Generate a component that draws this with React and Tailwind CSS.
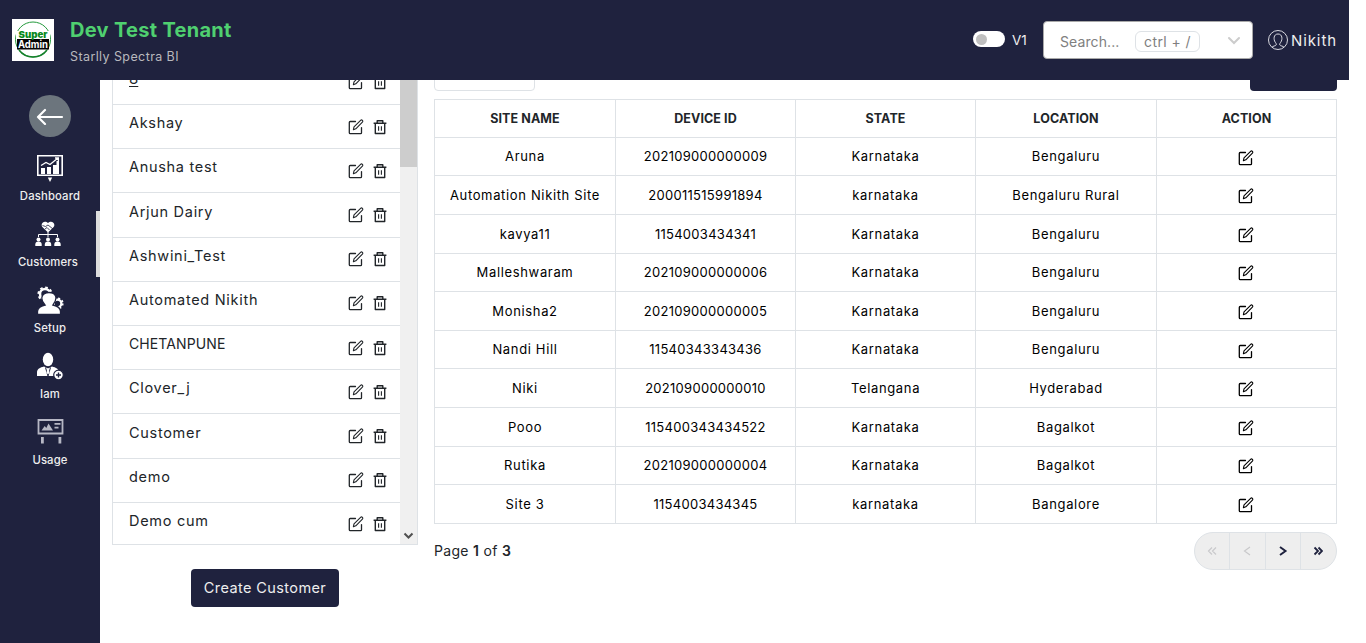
const customers = ["8", "Akshay", "Anusha test", "Arjun Dairy", "Ashwini_Test", "Automated Nikith", "CHETANPUNE", "Clover_j", "Customer", "demo", "Demo cum"];

const columns = ["SITE NAME", "DEVICE ID", "STATE", "LOCATION", "ACTION"];

const sites = [
  ["Aruna", "202109000000009", "Karnataka", "Bengaluru"],
  ["Automation Nikith Site", "200011515991894", "karnataka", "Bengaluru Rural"],
  ["kavya11", "1154003434341", "Karnataka", "Bengaluru"],
  ["Malleshwaram", "202109000000006", "Karnataka", "Bengaluru"],
  ["Monisha2", "202109000000005", "Karnataka", "Bengaluru"],
  ["Nandi Hill", "11540343343436", "Karnataka", "Bengaluru"],
  ["Niki", "202109000000010", "Telangana", "Hyderabad"],
  ["Pooo", "115400343434522", "Karnataka", "Bagalkot"],
  ["Rutika", "202109000000004", "Karnataka", "Bagalkot"],
  ["Site 3", "1154003434345", "karnataka", "Bangalore"],
];

function EditIcon() {
  return (
    <svg viewBox="0 0 16 16" className="h-4 w-4 shrink-0" fill="none" stroke="currentColor" strokeWidth="1.3" strokeLinecap="round" strokeLinejoin="round">
      <path d="M7.500 2.500H2.200a.9.900 0 0 0-.9.900v10.400c0 .5.400.9.900.9h10.400c.5 0 .9-.4.900-.9V8.600" />
      <path d="M5.400 10.700l.6-2.900 6.600-6.500c.5-.5 1.300-.5 1.800 0s.5 1.300 0 1.800L7.800 9.800z" strokeWidth="1.100" />
    </svg>
  );
}

function TrashIcon() {
  return (
    <svg viewBox="0 0 16 16" className="ml-2 h-4 w-4 shrink-0" fill="none" stroke="currentColor" strokeWidth="1.400" strokeLinejoin="round">
      <path d="M1.600 4.200h12.800M3.300 4.200v10.300h9.400V4.200M5.200 4V1.700h5.600V4" />
      <path d="M6.600 7.200v4.500M9.400 7.200v4.500" strokeWidth="1.100" />
    </svg>
  );
}

function Logo() {
  return (
    <svg viewBox="0 0 42 42" className="h-[42px] w-[42px] bg-white">
      <circle cx="21" cy="20.5" r="17.500" fill="none" stroke="#249a3c" strokeWidth="1" />
      <path d="M7 31A17.500 17.500 0 0 0 35 31" fill="none" stroke="#15802b" strokeWidth="1.600" />
      <rect x="4" y="12" width="34" height="8" fill="#fff" />
      <rect x="5" y="20" width="32" height="10.500" fill="#050505" />
      <text x="21" y="18.800" textAnchor="middle" textLength="29" lengthAdjust="spacingAndGlyphs" fontFamily="Inter, sans-serif" fontWeight="900" fontSize="9.500" fill="#0a8a1c">Super</text>
      <text x="21" y="28.800" textAnchor="middle" textLength="30" lengthAdjust="spacingAndGlyphs" fontFamily="Inter, sans-serif" fontWeight="700" fontSize="10" fill="#fff">Admin</text>
    </svg>
  );
}

function DashboardIcon() {
  return (
    <svg viewBox="0 0 28 28" className="h-7 w-7" fill="#fff">
      <path d="M1.800 1.800h24.400v19.400H1.800z" fill="none" stroke="#fff" strokeWidth="1.600" />
      <path d="M5 14h4v6H5zM11 13h4v7h-4zM17 11h3.500v9H17zM20.500 7H23v13h-2.500z" />
      <path d="M5 11.500l5-3 4 2 8-6.500M19 4h3.400v3.400" fill="none" stroke="#fff" strokeWidth="1.300" />
      <path d="M11.800 23.500h4.400L14 28z" />
    </svg>
  );
}

function Person({ x }) {
  return (
    <g transform={`translate(${x} 0)`}>
      <circle cx="0" cy="19.500" r="2" />
      <path d="M-3.200 26v-1.400a3.200 3.200 0 0 1 6.400 0V26z" />
    </g>
  );
}

function CustomersIcon() {
  return (
    <svg viewBox="0 0 28 28" className="h-7 w-7" fill="#fff">
      <path d="M14 12.500L8.600 7.300C5.500 3.600 10.600 -.6 14 3c3.400-3.600 8.500.6 5.400 4.300z" />
      <path d="M8.500 5.500l3 1 2.500-1.500 5 4M11 9l2-1.500 2.500 2.500" fill="none" stroke="#1f223e" strokeWidth=".8" />
      <path d="M14 12v5M4.500 17v-2.500h19V17" fill="none" stroke="#fff" strokeWidth="1" />
      <Person x={4.5} />
      <Person x={14} />
      <Person x={23.5} />
    </svg>
  );
}

function SetupIcon() {
  return (
    <svg viewBox="0 0 28 28" className="h-7 w-7" fill="#fff">
      <circle cx="9" cy="8" r="5" fill="none" stroke="#fff" strokeWidth="2.500" />
      <circle cx="9" cy="8" r="6.600" fill="none" stroke="#fff" strokeWidth="2" strokeDasharray="2.590 2.590" />
      <circle cx="21.500" cy="17.500" r="3.800" fill="none" stroke="#fff" strokeWidth="2.200" />
      <circle cx="21.500" cy="17.500" r="5.200" fill="none" stroke="#fff" strokeWidth="1.800" strokeDasharray="2.040 2.040" />
      <path d="M1.500 28.500v-3c0-4 3-5.500 7.500-6.500-5.500-6-3.500-12.500 4-12.500S22 12.500 17 19c4.500 1 7.500 2.500 7.500 6.500v3z" stroke="#1f223e" strokeWidth="1.300" />
    </svg>
  );
}

function IamIcon() {
  return (
    <svg viewBox="0 0 28 28" className="h-7 w-7" fill="#fff">
      <ellipse cx="12" cy="7.500" rx="5.200" ry="6.800" />
      <path d="M1 24v-3.500c0-3.500 3-5 7-6l4 2 4-2c4 1 7 2.500 7 6V24z" />
      <path d="M9.500 15.500L12 24l2.500-8.500" fill="none" stroke="#1f223e" strokeWidth="1" />
      <path d="M11.200 16.500h1.600l.6 4-1.400 2-1.400-2z" />
      <circle cx="22.500" cy="23" r="4.800" stroke="#1f223e" strokeWidth="1.200" />
      <path d="M20 23h5M22.500 20.500v5" stroke="#1f223e" strokeWidth="1.400" />
    </svg>
  );
}

function UsageIcon() {
  return (
    <svg viewBox="0 0 28 28" className="h-7 w-7" fill="#b6b7c4">
      <path d="M2.500 2h24v13.500h-24z" fill="none" stroke="#b6b7c4" strokeWidth="1.800" />
      <path d="M5.500 12.500l3.200-4.500 1.600 2L12.500 5.500l4.500 7zM18.500 5h6v1.800h-6zM18.500 8.800h4v1.800h-4zM5 19h2.800v6.500H5zM22.500 19h2.800v6.500h-2.800z" />
    </svg>
  );
}

const nav = [
  { label: "Dashboard", Icon: DashboardIcon },
  { label: "Customers", Icon: CustomersIcon, active: true },
  { label: "Setup", Icon: SetupIcon },
  { label: "Iam", Icon: IamIcon },
  { label: "Usage", Icon: UsageIcon },
];

function Header() {
  return (
    <header className="z-10 flex h-20 w-[1349px] shrink-0 items-center bg-[#1f223e] pl-3 pr-3">
      <Logo />
      <div className="ml-4 pt-0.5">
        <div className="text-[20px] leading-[30px] font-bold tracking-[0.3px] text-[#4fd070]">Dev Test Tenant</div>
        <div className="text-[12.5px] leading-[23px] tracking-[0.4px] text-[#b9b9bd]">Starlly Spectra BI</div>
      </div>
      <div className="mb-0.5 ml-auto flex h-4 w-8 items-center rounded-full bg-white px-[3px]">
        <div className="h-[11px] w-[11px] rounded-full bg-[#bfbfbf]" />
      </div>
      <span className="ml-[7px] w-[15px] text-[13.5px] text-[#eeeeee]">V1</span>
      <div className="ml-[16px] flex h-[38px] w-[210px] items-center rounded border border-[#a9a9a9] bg-white pl-4 pr-3 text-[#808080]">
        <span className="w-[75px] pt-0.5 text-[14px] tracking-[0.1px]">Search...</span>
        <span className="mt-0.5 flex h-[21px] w-[65px] items-center justify-center rounded-md border border-[#dee2e6] text-[14px] tracking-[0.4px]">ctrl + /</span>
        <svg viewBox="0 0 12 12" className="ml-auto h-3 w-3" fill="none" stroke="#cccccc" strokeWidth="2" strokeLinecap="round"><path d="M1 4l5 5 5-5" /></svg>
      </div>
      <svg viewBox="0 0 20 20" className="ml-[15px] h-5 w-5" fill="none" stroke="#ececf0" strokeWidth="0.9">
        <circle cx="10" cy="10" r="9.500" />
        <path d="M4 17.300c.5-1.300 3.800-1.300 4.200-2.300.3-1-.2-1.800-1-2.800C5.400 9.500 5.400 4 10 4s4.600 5.500 2.800 8.200c-.8 1-1.300 1.800-1 2.800.4 1 3.700 1 4.200 2.300" />
      </svg>
      <span className="ml-[3px] w-[46px] pt-0.5 text-[15px] tracking-[0.9px] text-[#eeeeee]">Nikith</span>
    </header>
  );
}

function Sidebar() {
  return (
    <aside className="flex w-[100px] shrink-0 flex-col items-center bg-[#1f223e] pt-[15px]">
      <button className="mb-2 flex h-[42px] w-[42px] items-center justify-center rounded-full bg-[#6c757d]">
        <svg viewBox="0 0 28 18" className="h-[18px] w-7" fill="none" stroke="#fff" strokeWidth="2.200" strokeLinecap="round" strokeLinejoin="round"><path d="M26 10H2M9 3L2 10l7 7" /></svg>
      </button>
      {nav.map(({ label, Icon, active }) => (
        <div key={label} className={active ? "flex h-[66px] w-full flex-col items-center border-r-4 border-[#dddddd] pt-[9px]" : "flex h-[66px] w-full flex-col items-center pt-[9px]"}>
          <Icon />
          <span className="mt-[5px] text-[11.3px] leading-[18px] font-medium tracking-[0.15px] text-[#eeeeee]">{label}</span>
        </div>
      ))}
    </aside>
  );
}

function nameClass(name) {
  if (name.length === 1) return "-mt-1.5 text-[15px] underline underline-offset-2";
  if (name === name.toUpperCase()) return "-mt-2 text-[14px] tracking-[0.1px]";
  return "-mt-[7px] text-[14.5px] tracking-[0.7px]";
}

function CustomerPanel() {
  return (
    <section className="flex w-[306px] flex-col items-center">
      <div className="flex h-[485px] w-full overflow-hidden border border-t-0 border-[#dee2e6]">
        <div className="-mt-[0.15px] flex-1">
          {customers.map((name) => (
            <div key={name} className="flex h-[44.19px] items-center border-t border-[#dee2e6] pl-4 pr-3">
              <span className={nameClass(name)}>{name}</span>
              <span className="ml-auto flex"><EditIcon /><TrashIcon /></span>
            </div>
          ))}
        </div>
        <div className="flex w-[17px] flex-col justify-between bg-[#f0f0f0]">
          <div className="h-[107px] bg-[#cdcdcd]" />
          <svg viewBox="0 0 17 17" className="h-[17px] w-[17px]" fill="none" stroke="#505050" strokeWidth="2"><path d="M4.500 6.500l4 4 4-4" /></svg>
        </div>
      </div>
      <button className="mt-6 h-[38px] w-[148px] rounded bg-[#1f223e] text-[14.5px] tracking-[0.4px] text-[#eeeeee]">Create Customer</button>
    </section>
  );
}

function Pagination() {
  const pages = ["first", "previous", "next", "last"];
  return (
    <div className="mt-[8.2px] flex h-[38px] items-center justify-between">
      <span className="text-[14px] tracking-[0.3px]">Page <b className="font-semibold">1</b> of <b className="font-semibold">3</b></span>
      <div className="grid h-[38px] w-[143px] grid-cols-4 overflow-hidden rounded-full border border-[#dee2e6] bg-[#eeeeee]">
        {pages.map((p, i) => (
          <span key={p} className={i < 2 ? "flex items-center justify-center border-r border-[#dee2e6] text-[#c9c9cb]" : "flex items-center justify-center border-r border-[#dee2e6] text-[#1f223e] last:border-r-0"}>
            <svg viewBox="0 0 10 10" className="h-[10px] w-[10px]" fill="none" stroke="currentColor" strokeWidth={i < 2 ? "1.2" : "1.8"}>
              {i === 0 && <path d="M5 1.500L1.500 5 5 8.500M9 1.500L5.500 5 9 8.500" />}
              {i === 1 && <path d="M8 1L2.500 5 8 9" />}
              {i === 2 && <path d="M2 1l5.500 4L2 9" strokeWidth="2" />}
              {i === 3 && <path d="M1.500 1.500L5 5 1.500 8.500M5.500 1.500L9 5 5.500 8.500" />}
            </svg>
          </span>
        ))}
      </div>
    </div>
  );
}

function SitePanel() {
  return (
    <section className="w-[903px]">
      <div className="mb-2 flex justify-between">
        <div className="flex h-[31px] w-[101px] items-center rounded border border-[#dee2e6] pt-px pl-2 text-[13px] text-[#6c757d]">Show 10</div>
        <button className="h-[31px] w-[87px] rounded bg-[#1f223e] pt-px text-[12px] text-[#eeeeee]">Create Site</button>
      </div>
      <div className="border-t border-l border-[#dee2e6] text-center text-[13px] text-black">
        <div className="grid h-[37.8px] grid-cols-[181px_180px_180px_181px_180px] font-bold text-[#212529]">
          {columns.map((c) => (
            <div key={c} className="flex items-center justify-center border-r border-b border-[#dee2e6] pt-px text-[12.5px] tracking-[0.1px]">{c}</div>
          ))}
        </div>
        {sites.map((row) => (
          <div key={row[0]} className="grid h-[38.6px] grid-cols-[181px_180px_180px_181px_180px]">
            {row.map((v, i) => (
              <div key={i} className={i === 1 ? "flex items-center justify-center border-r border-b border-[#dee2e6] pt-px tracking-[0.28px]" : "flex items-center justify-center border-r border-b border-[#dee2e6] pt-px tracking-[0.65px]"}>{v}</div>
            ))}
            <div className="flex items-center justify-center border-r border-b border-[#dee2e6] pt-[2px] pr-px"><EditIcon /></div>
          </div>
        ))}
      </div>
      <Pagination />
    </section>
  );
}

export default function App() {
  return (
    <div className="flex h-[643px] w-[1366px] flex-col overflow-hidden bg-white font-[Inter,sans-serif] text-[#212529]">
      <Header />
      <div className="flex min-h-0 flex-1">
        <Sidebar />
        <main className="flex-1 overflow-hidden pl-3">
          <div className="-mt-5 flex gap-4">
            <CustomerPanel />
            <SitePanel />
          </div>
        </main>
      </div>
    </div>
  );
}
